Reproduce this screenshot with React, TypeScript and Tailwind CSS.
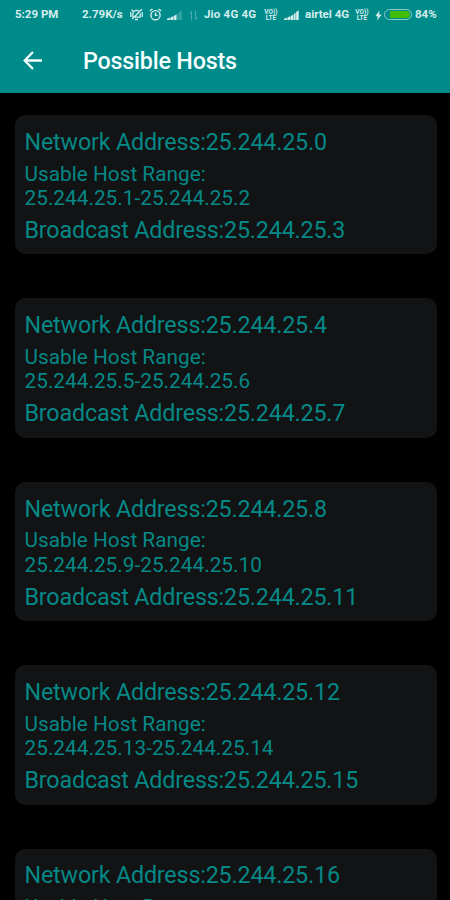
import { ReactNode } from "react"

const hosts = [
  { network: "25.244.25.0", first: "25.244.25.1", last: "25.244.25.2", broadcast: "25.244.25.3" },
  { network: "25.244.25.4", first: "25.244.25.5", last: "25.244.25.6", broadcast: "25.244.25.7" },
  { network: "25.244.25.8", first: "25.244.25.9", last: "25.244.25.10", broadcast: "25.244.25.11" },
  { network: "25.244.25.12", first: "25.244.25.13", last: "25.244.25.14", broadcast: "25.244.25.15" },
  { network: "25.244.25.16", first: "25.244.25.17", last: "25.244.25.18", broadcast: "25.244.25.19" },
]

type Host = (typeof hosts)[number]

function SilentIcon() {
  return (
    <svg className="-mt-px ml-[7px] shrink-0" width="13" height="13" viewBox="0 0 13 13" fill="none" stroke="currentColor" strokeWidth="1.3">
      <path d="M2.8 9.2V6a3.7 3.7 0 0 1 6.4-2.4M10.2 5.5v3.7H5M5 11.5h3M11.9 1.3 2.2 11M.8 4v5M12.2 4v5M1.5 1.8l2 1.8" />
    </svg>
  )
}

function AlarmIcon() {
  return (
    <svg className="-mt-px ml-1.5 shrink-0" width="13" height="13" viewBox="0 0 13 13" fill="none" stroke="currentColor" strokeWidth="1.4">
      <circle cx="6.5" cy="7.2" r="4.6" />
      <path d="M6.5 4.8v2.6h2M.8 3 3.5 1M12.2 3 9.5 1" />
    </svg>
  )
}

function SignalIcon({ weak = false }: { weak?: boolean }) {
  return (
    <svg className="shrink-0" width="15" height="11" viewBox="0 0 15 11" fill="currentColor">
      <path d="M0 10V8.8l2.9-1V10zM3.4 10V7.5l2.8-1.2V10zM6.7 10V6l2.8-1.5V10z" />
      <path d="M10 10V3.8l1.6-1V10zM12.1 10V2L14.7.3V10z" opacity={weak ? 0.25 : 1} />
    </svg>
  )
}

function VolteIcon() {
  return (
    <span className="flex w-[14px] shrink-0 flex-col items-center text-[6.5px] leading-[6px] font-bold">
      <span>VO))</span>
      <span>LTE</span>
    </span>
  )
}

function StatusText({ children, className }: { children: ReactNode; className: string }) {
  return <span className={`shrink-0 whitespace-nowrap ${className}`}>{children}</span>
}

function StatusBar() {
  return (
    <div className="flex h-[30px] items-center pl-[15px] text-[11.5px] leading-none font-bold text-[#d5eeee]">
      <StatusText className="w-[67px]">5:29 PM</StatusText>
      <StatusText className="w-[41px]">2.79K/s</StatusText>
      <SilentIcon />
      <AlarmIcon />
      <div className="ml-[5px] flex">
        <SignalIcon weak />
      </div>
      <svg className="ml-[7px] shrink-0 opacity-35" width="9" height="11" viewBox="0 0 9 11" fill="none" stroke="currentColor">
        <path d="M2.5 10.5V1.5L.5 4M6.5.5v9l2-2.5" />
      </svg>
      <StatusText className="ml-1.5 w-[60px] tracking-[0.2px]">Jio 4G 4G</StatusText>
      <VolteIcon />
      <div className="ml-1.5 flex">
        <SignalIcon />
      </div>
      <StatusText className="ml-1.5 w-[50px]">airtel 4G</StatusText>
      <VolteIcon />
      <svg className="ml-1.5 shrink-0" width="7" height="11" viewBox="0 0 7 11" fill="currentColor">
        <path d="M4.5.5.3 6.2h2.5L2 10.5l4.7-6H4z" />
      </svg>
      <div className="-mt-px ml-[2px] flex h-[11px] w-[28px] shrink-0 rounded-full border border-[#8dcccc] p-px">
        <div className="ml-[4px] flex-1 rounded-r-full bg-[#42bd0b]" />
      </div>
      <StatusText className="ml-[3px]">84%</StatusText>
    </div>
  )
}

function HostCard({ host }: { host: Host }) {
  return (
    <div className="h-[139.4px] shrink-0 rounded-[10px] bg-[#111314] pt-[13.9px] pl-[10px] whitespace-nowrap text-[#058886]">
      <p className="text-[23.3px] leading-[27px] tracking-[-0.18px]">Network Address:{host.network}</p>
      <div className="mt-[5.8px] text-[20.8px] leading-[24.2px]">
        <p>Usable Host Range:</p>
        <p>
          {host.first}-{host.last}
        </p>
      </div>
      <p className="mt-[7px] text-[23.3px] leading-[27px] tracking-[-0.18px]">Broadcast Address:{host.broadcast}</p>
    </div>
  )
}

export default function App() {
  return (
    <div className="flex h-[900px] w-[450px] flex-col overflow-hidden bg-black font-[Roboto,sans-serif]">
      <header className="h-[92.5px] shrink-0 bg-[#008b8b]">
        <StatusBar />
        <div className="flex h-[62px] items-center pl-[23px] text-[#f5ffff]">
          <svg width="20" height="20" viewBox="0 0 20 20" fill="none" stroke="currentColor" strokeWidth="2.3">
            <path d="M19 9.5H2M10 1 1.7 9.5 10 18" />
          </svg>
          <h1 className="ml-[40px] pt-0.5 text-[23.3px] leading-none font-medium tracking-[-0.2px]">Possible Hosts</h1>
        </div>
      </header>
      <main className="flex flex-col gap-[44px] overflow-hidden pt-[22.5px] pr-[13.5px] pl-[14.5px]">
        {hosts.map((host) => (
          <HostCard key={host.network} host={host} />
        ))}
      </main>
    </div>
  )
}
